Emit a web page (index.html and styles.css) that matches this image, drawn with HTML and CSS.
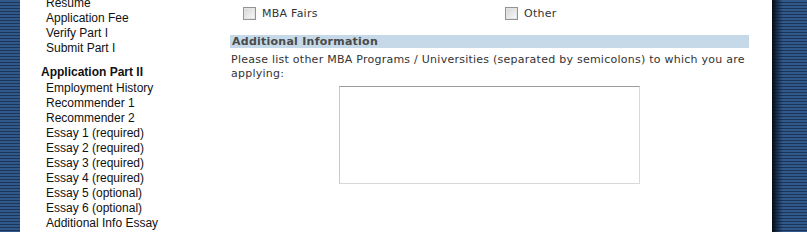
FILE: index.html
```html
<!DOCTYPE html>
<html lang="en">
<head>
    <meta charset="UTF-8">
    <title>MBA Application</title>
    <link rel="stylesheet" href="styles.css">
</head>
<body>

<div class="page">
    <div class="stripe stripe-left"></div>

    <div class="main">
        <!-- Navigation -->
        <div class="sidebar">
            <ul class="nav">
                <li>Resume</li>
                <li>Application Fee</li>
                <li>Verify Part I</li>
                <li>Submit Part I</li>
            </ul>
            <h3 class="nav-title">Application Part II</h3>
            <ul class="nav">
                <li>Employment History</li>
                <li>Recommender 1</li>
                <li>Recommender 2</li>
                <li>Essay 1 (required)</li>
                <li>Essay 2 (required)</li>
                <li>Essay 3 (required)</li>
                <li>Essay 4 (required)</li>
                <li>Essay 5 (optional)</li>
                <li>Essay 6 (optional)</li>
                <li>Additional Info Essay</li>
            </ul>
        </div>

        <!-- Form -->
        <div class="content">
            <div class="opt-row">
                <label class="opt"><input type="checkbox" class="check"> MBA Fairs</label>
                <label class="opt"><input type="checkbox" class="check"> Other</label>
            </div>

            <div class="section-title">Additional Information</div>
            <p class="hint">Please list other MBA Programs / Universities (separated by semicolons) to which you are applying:</p>
            <textarea class="other-programs"></textarea>
        </div>
    </div>

    <div class="stripe stripe-right"></div>
</div>

</body>
</html>
```

FILE: styles.css
```css
body {
    margin: 0;
    background: #fff;
    overflow: hidden;
}

.page {
    display: flex;
    height: 232px;
}

.stripe {
    flex: none;
    background: repeating-linear-gradient(to bottom, #30598a 0, #30598a 2px, #1b3659 2px, #1b3659 3px);
}

.stripe-left {
    width: 20px;
}

.stripe-right {
    width: 35px;
    background:
        linear-gradient(to right, #050a12 0, rgba(10, 20, 35, 0.6) 5px, rgba(0, 0, 0, 0) 11px),
        repeating-linear-gradient(to bottom, #30598a 0, #30598a 2px, #1b3659 2px, #1b3659 3px);
}

.main {
    flex: 1;
    display: flex;
    padding-right: 23px;
}

/* левая колонка */
.sidebar {
    width: 189px;
    padding-left: 21px;
    margin-top: -4px;
    font-family: "Liberation Sans", Arial, sans-serif;
    font-size: 12px;
    line-height: 15px;
    color: #111;
}

.nav {
    list-style: none;
    margin: 0;
    padding: 0 0 0 5px;
}

.nav-title {
    margin: 9px 0 1px;
    font-size: 12px;
    line-height: 15px;
    font-weight: bold;
}

/* форма */
.content {
    width: 519px;
    font-family: "DejaVu Sans", Verdana, sans-serif;
    font-size: 11px;
    letter-spacing: 0.25px;
    color: #333;
}

.opt-row {
    display: grid;
    grid-template-columns: 262px 1fr;
    margin-top: 4px;
    height: 19px;
}

.opt {
    display: flex;
    align-items: center;
    gap: 6px;
    padding-left: 13px;
}

.check {
    appearance: none;
    -webkit-appearance: none;
    width: 13px;
    height: 13px;
    margin: 0;
    border: 1px solid #939393;
    background: linear-gradient(135deg, #d4d4d4 0%, #ebebeb 60%, #fbfbfb 100%);
    box-shadow: inset 0 0 0 1px #e4e4e4;
}

.section-title {
    margin-top: 12px;
    height: 13px;
    line-height: 13px;
    padding-left: 2px;
    background-color: #c6d9e9;
    color: #4a4a4a;
    font-weight: bold;
}

.hint {
    margin: 5px 0 0;
    padding-left: 1px;
    line-height: 14px;
}

.other-programs {
    display: block;
    box-sizing: border-box;
    width: 301px;
    height: 98px;
    margin: 5px auto 0;
    padding: 0;
    border: 1px solid #d8d8d8;
    border-top-color: #9c9c9c;
    border-left-color: #c8c8c8;
    resize: none;
}
```
